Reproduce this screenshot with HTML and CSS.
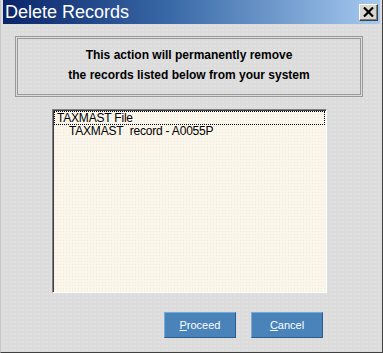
FILE: index.html
```html
<!DOCTYPE html>
<html lang="en">
<head>
  <meta charset="UTF-8">
  <title>Delete Records</title>
  <link rel="stylesheet" href="styles.css">
</head>
<body>

  <div class="window">
    <div class="title-bar">
      <span class="title">Delete Records</span>
      <button class="close-btn" title="Close">
        <svg width="11" height="10" viewBox="0 0 11 10">
          <path d="M1 0.5 L10 9.5 M10 0.5 L1 9.5" stroke="#000" stroke-width="2.2" fill="none"/>
        </svg>
      </button>
    </div>

    <div class="content">
      <div class="message">
        <p>This action will permanently remove</p>
        <p>the records listed below from your system</p>
      </div>

      <div class="record-list">
        <div class="row selected">TAXMAST File</div>
        <div class="row child">TAXMAST&nbsp; record - A0055P</div>
      </div>

      <div class="buttons">
        <button class="btn"><u>P</u>roceed</button>
        <button class="btn"><u>C</u>ancel</button>
      </div>
    </div>
  </div>

</body>
</html>
```

FILE: styles.css
```css
body {
  margin: 0;
  font-family: 'Liberation Sans', Arial, sans-serif;
  background-color: #dcdcdc;
}

.window {
  width: 383px;
  height: 353px;
  box-sizing: border-box;
  padding: 0 2px 2px 2px;
  border-left: 1px solid #c8c8c8;
  border-right: 1px solid #404040;
  border-bottom: 1px solid #404040;
  background-color: #dcdcdc;
  background-image: radial-gradient(#e6e6e6 0.6px, transparent 0.8px);
  background-size: 4px 4px;
  display: flex;
  flex-direction: column;
}

.title-bar {
  height: 24px;
  display: flex;
  align-items: center;
  justify-content: space-between;
  background: linear-gradient(to right, #0a246a 0%, #3a6aa8 45%, #a6caf0 100%);
}

.title {
  color: #fff;
  font-size: 18px;
  padding-left: 2px;
  padding-top: 1px;
}

.close-btn {
  width: 19px;
  height: 17px;
  margin-right: 2px;
  padding: 0;
  display: flex;
  align-items: center;
  justify-content: center;
  background: #d8d8d0;
  border: 1px solid;
  border-color: #fff #404040 #404040 #fff;
  box-shadow: inset -1px -1px 0 #808080;
}

.content {
  flex: 1;
  display: flex;
  flex-direction: column;
}

.message {
  margin: 12px 0 0 12px;
  width: 348px;
  height: 61px;
  box-sizing: border-box;
  border: 3px double #9a9a9a;
  padding-top: 6px;
  text-align: center;
  font-weight: bold;
  font-size: 12px;
  color: #000;
}

.message p {
  margin: 0;
  line-height: 20px;
}

.record-list {
  margin: 12px 0 0 49px;
  width: 275px;
  height: 184px;
  box-sizing: border-box;
  border: 1px solid;
  border-color: #808080 #fff #fff #808080;
  box-shadow: inset 1px 1px 0 #404040;
  padding: 1px 1px 0 1px;
  background-color: #fbf6ec;
  background-image: radial-gradient(#f0ead8 0.6px, transparent 0.8px);
  background-size: 3px 3px;
  font-size: 12px;
  color: #000;
}

.row {
  line-height: 13px;
  padding-left: 3px;
  letter-spacing: -0.2px;
}

.row.selected {
  line-height: 12px;
  padding-left: 2px;
  border: 1px dotted #000;
}

.row.child {
  padding-left: 15px;
}

.buttons {
  margin: 19px 0 0 161px;
  display: flex;
  gap: 15px;
}

.btn {
  width: 72px;
  height: 26px;
  padding: 0;
  font-family: 'Liberation Sans', Arial, sans-serif;
  font-size: 11px;
  color: #fff;
  background-color: #4a82ba;
  border: 1px solid;
  border-color: #78a8d8 #2c5a8a #2c5a8a #78a8d8;
  cursor: pointer;
}
```
